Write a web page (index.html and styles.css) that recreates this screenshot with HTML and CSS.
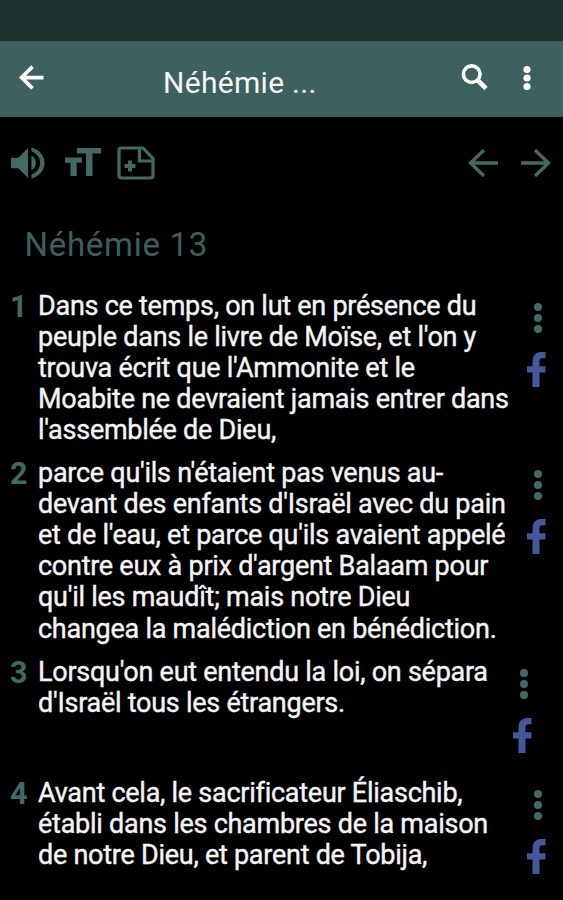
FILE: index.html
```html
<!DOCTYPE html>
<html lang="fr">
<head>
<meta charset="utf-8">
<title>Néhémie 13</title>
<link rel="stylesheet" href="styles.css">
</head>
<body>
<svg class="symbols" aria-hidden="true">
  <symbol id="dots" viewBox="0 0 10 32"><circle cx="5" cy="5" r="4"/><circle cx="5" cy="16" r="4"/><circle cx="5" cy="27" r="4"/></symbol>
  <symbol id="fb" viewBox="0 0 19 35"><path d="M5.500 35V20.500H0V14.200h5.500V9.500C5.500 3.500 8.800 0 14 0h4.500v6.200h-3.200c-2.200 0-2.800 1-2.800 3v5h6v6.300h-6V35z"/></symbol>
</svg>
<div class="status"></div>
<header class="bar">
  <svg class="back" viewBox="0 0 24 24"><path d="M23.500 12H2M13 1.500L2.500 12 13 22.500"/></svg>
  <div class="title">Néhémie ...</div>
  <svg class="search" viewBox="0 0 28 28"><circle cx="10.700" cy="10.200" r="8.300"/><path class="handle" d="M17 16.500l8 8"/></svg>
  <svg class="more" viewBox="0 0 8 26"><circle cx="4" cy="4.500" r="3.600"/><circle cx="4" cy="13" r="3.600"/><circle cx="4" cy="21.500" r="3.600"/></svg>
</header>
<nav class="tools">
  <svg class="sound" viewBox="0 0 36 34"><path d="M0 11.500h7.500L17.500 1.500v31L7.500 22.500H0zM21 9.500c6 2.500 6 12.500 0 15z"/><path d="M21 1c18 5 18 27 0 32v-4c12-4.500 12-19.500 0-24z"/></svg>
  <svg class="size" viewBox="0 0 36 30"><path d="M12 0h24v5.500h-8.500V28h-6.500V5.500h-9zM0 9.500h17v5.200h-5.300V28H5.500V14.700H0z"/></svg>
  <svg class="note" viewBox="0 0 38 34"><path d="M4.500 2h21.500L36 12.500v17q0 2.500-2.500 2.500H4.500Q2 32 2 29.500v-25Q2 2 4.500 2z"/><path d="M22.500 2v13H36"/><path class="plus" d="M13 14.500v11M7.500 20h11"/></svg>
  <svg class="prev" viewBox="0 0 30 28"><path d="M30 14H2M16 1L2.500 14 16 27"/></svg>
  <svg class="next" viewBox="0 0 30 28"><path d="M0 14h28M14 1l13.500 13L14 27"/></svg>
</nav>
<main>
  <h1>Néhémie 13</h1>
  <article class="verse">
    <span class="num">1</span>
    <p>Dans ce temps, on lut en présence du<br>peuple dans le livre de Moïse, et l'on y<br>trouva écrit que l'Ammonite et le<br>Moabite ne devraient jamais entrer dans<br>l'assemblée de Dieu,</p>
    <div class="actions"><svg class="menu"><use href="#dots"/></svg><svg class="share"><use href="#fb"/></svg></div>
  </article>
  <article class="verse">
    <span class="num">2</span>
    <p>parce qu'ils n'étaient pas venus au-<br>devant des enfants d'Israël avec du pain<br>et de l'eau, et parce qu'ils avaient appelé<br>contre eux à prix d'argent Balaam pour<br>qu'il les maudît; mais notre Dieu<br>changea la malédiction en bénédiction.</p>
    <div class="actions"><svg class="menu"><use href="#dots"/></svg><svg class="share"><use href="#fb"/></svg></div>
  </article>
  <article class="verse short">
    <span class="num">3</span>
    <p>Lorsqu'on eut entendu la loi, on sépara<br>d'Israël tous les étrangers.</p>
    <div class="actions"><svg class="menu"><use href="#dots"/></svg><svg class="share"><use href="#fb"/></svg></div>
  </article>
  <article class="verse">
    <span class="num">4</span>
    <p>Avant cela, le sacrificateur Éliaschib,<br>établi dans les chambres de la maison<br>de notre Dieu, et parent de Tobija,</p>
    <div class="actions"><svg class="menu"><use href="#dots"/></svg><svg class="share"><use href="#fb"/></svg></div>
  </article>
</main>
</body>
</html>
```
FILE: styles.css
```css
* { box-sizing: border-box; }
body { margin: 0; height: 900px; overflow: hidden; background: #000; color: #f4f4f4; font-family: Roboto, sans-serif; }
svg { display: block; flex: none; }
.symbols { display: none; }
.status { height: 41px; background: #1e302e; }
.bar { height: 76px; background: #3c615e; display: flex; align-items: flex-start; padding-left: 19px; color: #fff; }
.bar svg { fill: none; stroke: #fff; stroke-width: 3.6; }
.bar .back { width: 25px; height: 25px; margin-top: 24px; }
.title { margin: 24px 0 0 119px; width: 298px; font-size: 30px; line-height: 36px; letter-spacing: 0.3px; color: #f4f6f6; white-space: nowrap; }
.bar .search { width: 28px; height: 28px; margin-top: 23px; }
.bar .handle { stroke-width: 4.6; }
.bar .more { width: 8px; height: 26px; margin: 24px 0 0 34px; fill: #fff; stroke: none; }
.tools { height: 92px; display: flex; align-items: center; padding: 0 12px 0 11px; fill: #416a64; }
.sound { width: 35px; height: 34px; }
.size { width: 36px; height: 30px; margin-left: 19px; }
.note { width: 38px; height: 34px; margin-left: 16px; fill: none; stroke: #416a64; stroke-width: 3.2; }
.plus { stroke-width: 4; }
.prev, .next { width: 30px; height: 28px; fill: none; stroke: #416a64; stroke-width: 3.4; }
.prev { margin-left: auto; }
.next { margin-left: 23px; }
h1 { margin: 16px 0 0 24.5px; font-size: 33px; line-height: 40px; font-weight: 400; letter-spacing: 0.7px; color: #3b605b; }
main { display: flex; flex-direction: column; }
.verse { display: flex; margin-bottom: 12px; }
h1 + .verse { margin-top: 24px; }
.num { width: 28px; margin-left: 10px; font-size: 30.5px; line-height: 36px; font-weight: 700; color: #416a64; }
.verse p { position: relative; top: 1.6px; margin: 0; flex: 1; font-size: 27px; line-height: 31.1px; letter-spacing: -0.26px; white-space: nowrap; -webkit-text-stroke: 0.4px #f4f4f4; }
.actions { width: 19px; margin-right: 17px; padding-top: 13px; }
.menu { width: 10px; height: 32px; margin-left: 5.5px; fill: #416a64; }
.share { width: 19px; height: 35px; margin-top: 18px; fill: #43589b; }
.short { min-height: 109px; }
.short .actions { margin-right: 31px; }
```
